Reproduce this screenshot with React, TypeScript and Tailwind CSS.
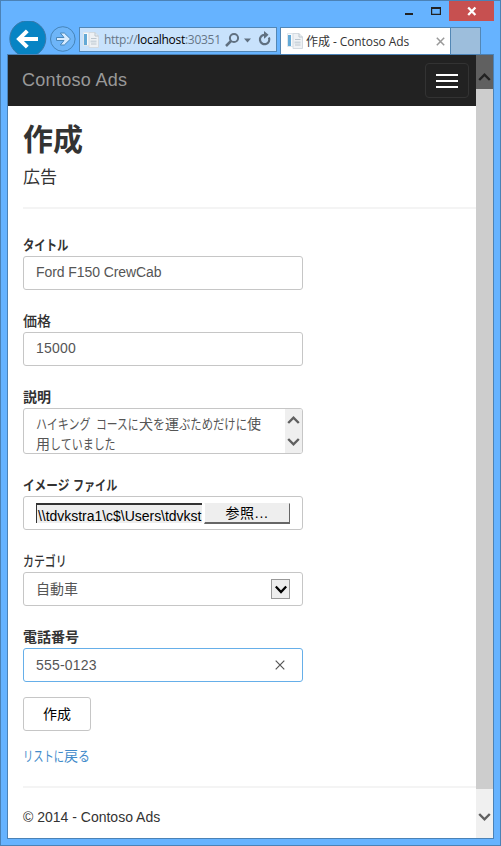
import React from 'react';

const latin = "font-['Liberation_Sans','Noto_Sans_CJK_JP',sans-serif]";
const segoe = "font-['Open_Sans','Noto_Sans_CJK_JP',sans-serif]";
const field = 'flex h-[34px] w-[280px] items-center rounded-[3px] border border-[#c6c6c6] bg-white pl-[12px] text-[14px] text-[#555]';

function Label({ children, className }: { children: React.ReactNode; className: string }) {
  return (
    <div className={`flex h-[21px] items-start whitespace-nowrap text-[14px] leading-[21px] text-[#333] ${className}`}>
      {children}
    </div>
  );
}

/* Kana run set in condensed proportions; className carries its width and scale. */
function Kana({ children, className }: { children: string; className: string }) {
  return <span className={`inline-block origin-left whitespace-pre ${className}`}>{children}</span>;
}

function PageIcon() {
  return (
    <svg width="16" height="16" viewBox="0 0 16 16" className="shrink-0">
      <path d="M.5.5h10v13H.5z" fill="#f8fafc" stroke="#dfe6ec" />
      <path d="M1 2h3v11H1z" fill="#63a9d6" />
      <path d="M6 .5h6l3.500 3.500v11.500H6z" fill="#eef1f4" stroke="#d3dae0" />
      <path d="M12 .5V4h3.500M8 6.500h5.500M8 12h5.500" fill="none" stroke="#bcc6ce" />
      <path d="M7.500 8.500h6v2h-6z" fill="#cbd4dc" />
    </svg>
  );
}

function Chevron({ down, color = '#606060' }: { down?: boolean; color?: string }) {
  return (
    <svg width="14" height="10" viewBox="0 0 14 10" className="shrink-0">
      <path d={down ? 'M1.200 2 6.500 7.300 11.800 2' : 'M1.200 8 6.500 2.700 11.800 8'} fill="none" stroke={color} strokeWidth="2.400" />
    </svg>
  );
}

function Chrome() {
  return (
    <header className="flex h-[53px] shrink-0 flex-col">
      <div className="flex h-[20px] items-start justify-end">
        <svg width="42" height="20" viewBox="0 0 42 20" className="mr-[5px]">
          <path d="M3 12h8v2H3z" fill="#222" />
          <path d="M29.600 7h8.800v6.400h-8.800z" fill="none" stroke="#222" strokeWidth="1.200" />
          <path d="M29 6h10v2H29z" fill="#222" />
        </svg>
        <div className="mr-[6px] flex h-[20px] w-[45px] items-center justify-center bg-[#c75050]">
          <svg width="10" height="10" viewBox="0 0 10 10">
            <path d="m1.200 1.500 7.200 7.500M8.400 1.500 1.200 9" stroke="#fff" strokeWidth="2.300" />
          </svg>
        </div>
      </div>
      <div className="flex h-[33px] items-start">
        <svg width="38" height="34" viewBox="0 0 38 34" className="ml-[8px] mr-[3px] shrink-0">
          <circle cx="18.800" cy="17.700" r="18" fill="#0784c4" stroke="#3b78a8" />
          <path d="M29 18H10.500M18.300 9.800 10 18l8.300 8.200" fill="none" stroke="#fff" strokeWidth="4" />
        </svg>
        <svg width="27" height="27" viewBox="0 0 27 27" className="mt-[5px] shrink-0">
          <circle cx="12.800" cy="13" r="12.300" fill="#6eb5f8" stroke="#4684b8" />
          <path d="M6.500 11.500h7.500L10.300 7h4L20.500 13l-6.200 6h-4l3.700-4.500H6.500z" fill="#d7ebff" stroke="#4987ba" />
        </svg>
        <div className="ml-[2px] mt-[6px] flex h-[25px] w-[198px] shrink-0 items-center border border-[#5387b5] bg-[#c8e2fc] pl-[3px]">
          <PageIcon />
          <div className={`ml-[5px] w-[117px] whitespace-nowrap text-[12px] tracking-[-0.280px] text-[#667687] ${segoe}`}>
            http://<span className="text-black">localhost</span>:30351
          </div>
          <svg width="50" height="18" viewBox="0 0 50 18" className="ml-[4px] shrink-0">
            <circle cx="9" cy="7" r="4.100" fill="none" stroke="#607080" strokeWidth="2" />
            <path d="m6 10-5 5" stroke="#607080" strokeWidth="2.500" />
            <path d="M19 7.500h7l-3.500 4z" fill="#607080" />
            <path d="M43.900 6.500A4.700 4.700 0 1 1 39.500 3.800" fill="none" stroke="#607080" strokeWidth="2.200" />
            <path d="M39 0v7.500h.5L43.500 3.800z" fill="#607080" />
          </svg>
        </div>
        <div className="ml-[3px] mt-[6px] flex h-[27px] w-[171px] shrink-0 items-center border border-b-0 border-[#5387b5] bg-white pl-[6px]">
          <PageIcon />
          <div className={`ml-[3px] w-[123px] whitespace-nowrap pt-px text-[12px] tracking-[-0.080px] text-[#333] ${segoe}`}>作成 - Contoso Ads</div>
          <svg width="9" height="9" viewBox="0 0 9 9" className="ml-[7px] shrink-0">
            <path d="m.8.8 7.400 7.400M8.200.8.8 8.200" stroke="#999" strokeWidth="1.500" />
          </svg>
        </div>
        <div className="mt-[6px] h-[27px] w-[30px] shrink-0 border border-b-0 border-l-0 border-[#5387b5] bg-[#9dbedc]" />
      </div>
    </header>
  );
}

export default function App() {
  return (
    <div className={`flex h-[846px] w-[501px] flex-col overflow-hidden border border-[#4b82b6] bg-[#66b3ff] ${latin}`}>
      <Chrome />
      <div className="ml-[6px] flex h-[785px] w-[487px] shrink-0 border border-[#4b82b6] bg-white">
        <main className="h-[783px] w-[468px] shrink-0">
          <nav className="flex h-[51px] items-center justify-between bg-[#222] pl-[14px] pr-[7px]">
            <span className="whitespace-nowrap text-[18px] tracking-[0.300px] text-[#999]">Contoso Ads</span>
            <div className="flex h-[35px] w-[44px] flex-col items-center justify-center gap-[4px] rounded border border-[#333] pt-px">
              <i className="h-[2px] w-[22px] bg-white" />
              <i className="h-[2px] w-[22px] bg-white" />
              <i className="h-[2px] w-[22px] bg-white" />
            </div>
          </nav>
          <div className="pl-[15px]">
            <h1 className="mt-[15px] h-[38px] text-[30px] font-bold leading-[38px] text-[#333]">作成</h1>
            <h2 className="mt-[6px] h-[24px] text-[17px] leading-[26px] text-[#333]">広告</h2>
            <div className="mt-[18px] h-[2px] bg-[#f4f4f4]" />

            <div className="mt-[26px]">
              <Label className="font-bold"><Kana className="w-[45px] scale-x-[0.81]">タイトル</Kana></Label>
              <div className={field}><span className="-mt-px tracking-[-0.080px]">Ford F150 CrewCab</span></div>
            </div>
            <div className="mt-[21px]">
              <Label className="font-medium">価格</Label>
              <div className={field}><span className="-mt-px tracking-[0.200px]">15000</span></div>
            </div>
            <div className="mt-[21px]">
              <Label className="font-bold">説明</Label>
              <div className="flex h-[46px] w-[280px] overflow-hidden rounded-[3px] border border-[#c6c6c6] pl-[12px]">
                <div className="w-[249px] shrink-0 whitespace-nowrap pt-[5px] text-[14px] leading-[20px] text-[#555]">
                  <div className="flex h-[20px]">
                    <Kana className="w-[60px] scale-x-[0.785]">ハイキング</Kana>
                    <Kana className="w-[43px] scale-x-[0.77]">コースに</Kana>
                    犬
                    <Kana className="w-[12px] scale-x-[0.85]">を</Kana>
                    運
                    <Kana className="w-[68px] scale-x-[0.81]">ぶためだけに</Kana>
                    使
                  </div>
                  <div className="flex h-[20px]">
                    用
                    <Kana className="w-[66px] scale-x-[0.785]">していました</Kana>
                  </div>
                </div>
                <div className="flex w-[17px] flex-col items-center justify-between bg-[#efefef] py-[6px]">
                  <Chevron />
                  <Chevron down />
                </div>
              </div>
            </div>
            <div className="mt-[21px]">
              <Label className="font-bold">
                <Kana className="w-[50px] scale-x-[0.83]">イメージ</Kana>
                <Kana className="w-[44px] scale-x-[0.79]">ファイル</Kana>
              </Label>
              <div className={field}>
                <div className="h-[20px] w-[166px] shrink-0 whitespace-nowrap border-l border-t-2 border-[#333] bg-[#eee] pl-px text-[14px] leading-[23px] tracking-[-0.030px] text-black">
                  \\tdvkstra1\c$\Users\tdvkst
                </div>
                <div className="ml-[2px] flex h-[21px] w-[86px] items-center justify-center border border-b-2 border-[#666] border-l-white border-t-[#eee] bg-[#eee] pt-[2px] text-[14px] tracking-[0.700px] text-black">
                  参照...
                </div>
              </div>
            </div>
            <div className="mt-[21px]">
              <Label className="font-medium"><Kana className="w-[43px] scale-x-[0.78]">カテゴリ</Kana></Label>
              <div className={field}>
                <span className="w-[235px]">自動車</span>
                <div className="flex h-[20px] w-[19px] items-center justify-center border border-[#999] bg-[#eee]">
                  <svg width="12" height="9" viewBox="0 0 12 9">
                    <path d="M.8 1.500 6 7l5.200-5.500" fill="none" stroke="#000" strokeWidth="2.300" />
                  </svg>
                </div>
              </div>
            </div>
            <div className="mt-[21px]">
              <Label className="font-bold">電話番号</Label>
              <div className="flex h-[34px] w-[280px] items-center rounded-[3px] border border-[#66afe9] pl-[12px] text-[14px] text-[#555]">
                <span className="w-[239px] tracking-[0.200px]">555-0123</span>
                <svg width="10" height="10" viewBox="0 0 10 10">
                  <path d="m.7.7 8.600 8.600M9.300.7.7 9.300" stroke="#555" strokeWidth="1.200" />
                </svg>
              </div>
            </div>
            <button className="mt-[15px] flex h-[34px] w-[68px] items-center justify-center rounded-[3px] border border-[#c6c6c6] text-[14px] text-black">作成</button>
            <a className="mt-[15px] flex h-[20px] whitespace-nowrap text-[14px] leading-[20px] text-[#428bca]">
              <Kana className="w-[41px] scale-x-[0.735]">リストに</Kana>
              戻
              <Kana className="w-[12px] scale-x-[0.85]">る</Kana>
            </a>
            <div className="mt-[20px] h-[2px] bg-[#f4f4f4]" />
            <footer className="mt-[19px] h-[20px] text-[14px] leading-[20px] text-[#333]">© 2014 - Contoso Ads</footer>
          </div>
        </main>
        <aside className="flex h-[783px] w-[17px] flex-col bg-[#cdcdcd]">
          <div className="flex h-[34px] items-center justify-center bg-[#606060] pt-[9px]"><Chevron color="#222" /></div>
          <div className="h-[700px]" />
          <div className="flex h-[49px] items-center justify-center bg-[#f0f0f0] pt-[6px]"><Chevron down /></div>
        </aside>
      </div>
    </div>
  );
}
